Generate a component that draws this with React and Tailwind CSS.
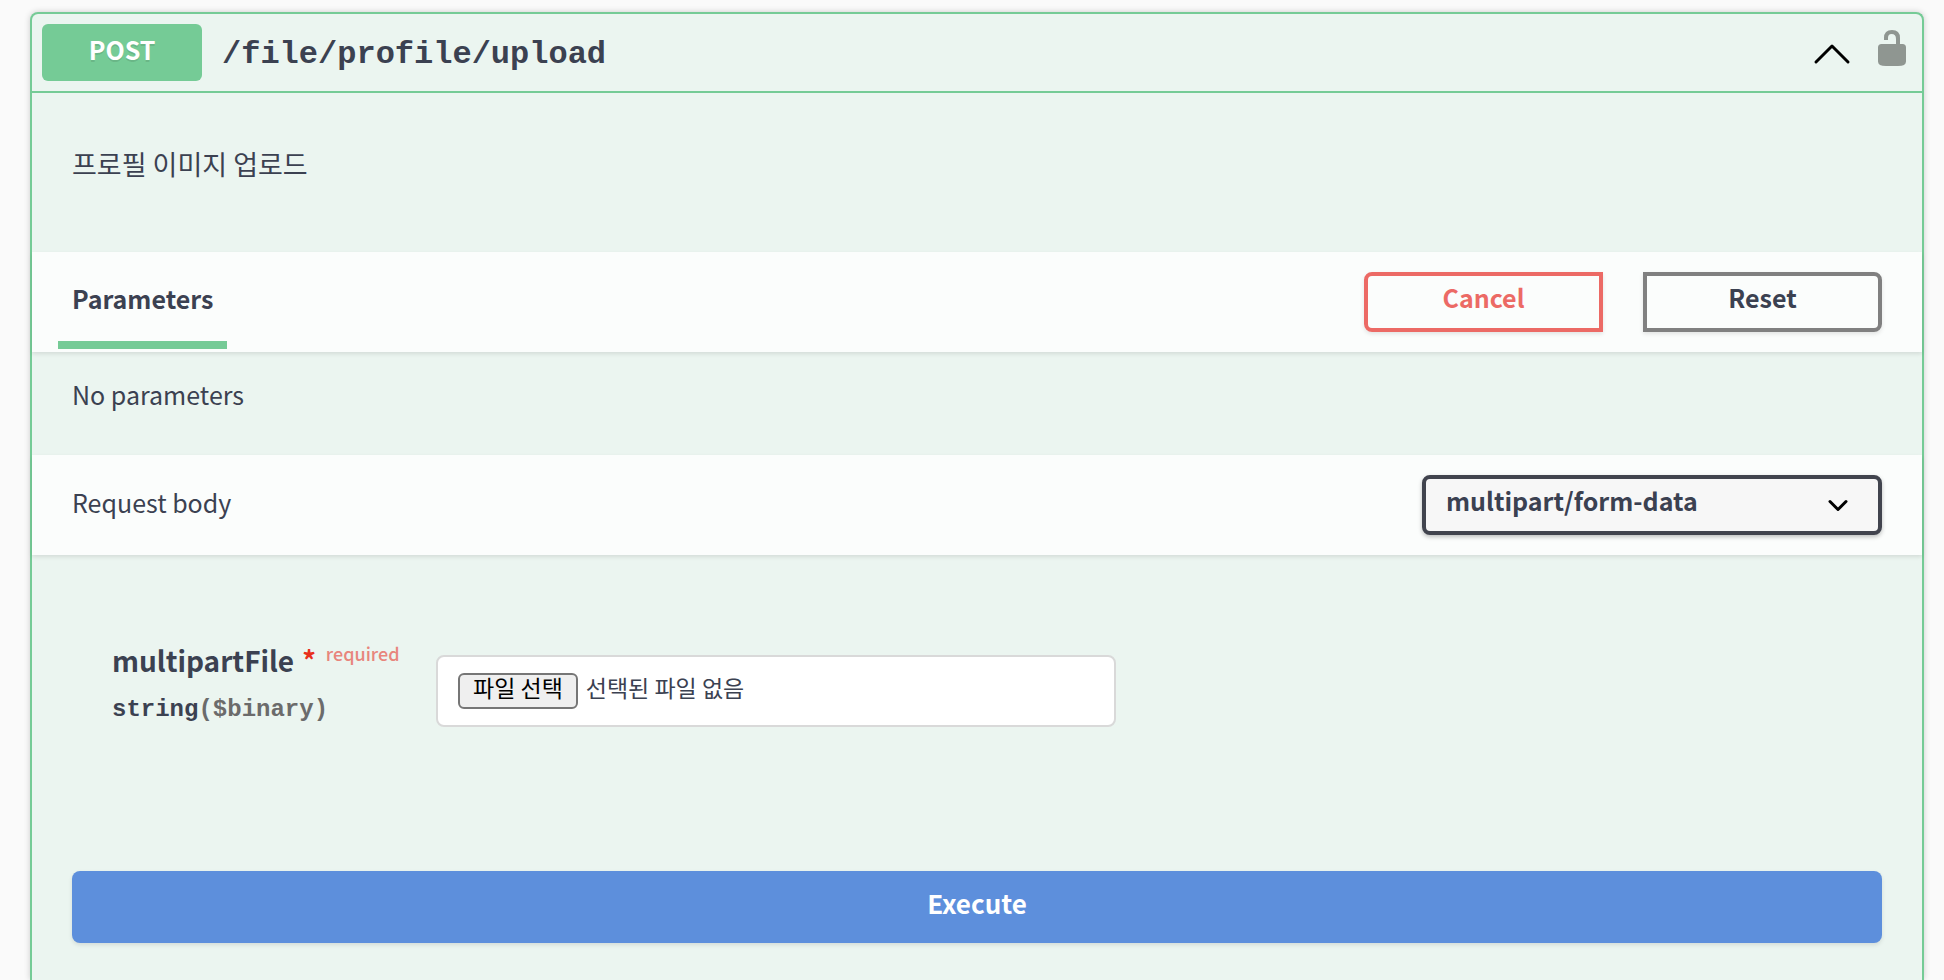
import { useRef, useState } from 'react'

export default function App() {
  const [open, setOpen] = useState(true)

  return (
    <div className="flex min-h-screen flex-col bg-[#fafafa] pt-3 pr-5 pl-[30px] font-['Noto_Sans_CJK_KR',sans-serif] text-[25px] leading-9 text-[#3b4151]">
      <section className="flex flex-1 flex-col rounded-t-lg border-2 border-b-0 border-[#75cb96] bg-[#ebf5f0] shadow-[0_0_6px_rgba(0,0,0,0.19)]">
        <Summary open={open} onToggle={() => setOpen(!open)} />
        {open && <Operation />}
      </section>
    </div>
  )
}

function Summary({ open, onToggle }) {
  return (
    <header className="flex items-center border-b-2 border-[#75cb96] px-[10px] py-[10px]">
      <span className="flex h-[57px] w-40 items-center justify-center rounded-md bg-[#75cb96] pb-2 font-bold text-white [text-shadow:0_2px_0_rgba(0,0,0,0.1)]">
        POST
      </span>
      <a href="#upload" className="ml-5 flex-1 pt-1 font-['Liberation_Mono',monospace] text-[32px] font-bold">
        /file/profile/upload
      </a>
      <button type="button" aria-label="Toggle operation" aria-expanded={open} onClick={onToggle} className="mr-6">
        <svg className="h-10 w-10" viewBox="0 0 40 40" fill="none" stroke="#000" strokeWidth="3" strokeLinecap="round" strokeLinejoin="round">
          <path d="M4 29 L20 13 L36 29" />
        </svg>
      </button>
      <button type="button" aria-label="Authorize" className="mr-1 pb-2">
        <svg className="h-10 w-8" viewBox="0 0 32 40" fill="#8f9691">
          <path d="M2 18.500 Q2 15 5.500 15 H20 V10 Q20 5 15.500 5 Q12 5 12 9 V11 H8 V9 Q8 1 16 1 Q24 1 24 9 V15 H26.500 Q30 15 30 18.500 V32.500 Q30 37 22 37 H10 Q2 37 2 32.500 Z" />
        </svg>
      </button>
    </header>
  )
}

function Operation() {
  return (
    <>
      <p className="px-10 pt-[53px] pb-[70px] text-[27px]">프로필 이미지 업로드</p>

      {/* Parameters */}
      <SectionBar>
        <h4 className="-ml-[14px] flex h-[97px] items-center self-start border-b-8 border-[#75cb96] px-[14px] pt-[2px] font-bold">
          Parameters
        </h4>
        <div className="flex gap-10">
          <button type="button" className="h-[60px] w-[239px] rounded-l-lg border-4 border-[#ec6a65] pb-[10px] font-bold text-[#ec6a65] shadow-[0_2px_4px_rgba(0,0,0,0.1)]">
            Cancel
          </button>
          <button type="button" className="h-[60px] w-[239px] rounded-r-lg border-4 border-[#808080] pb-[10px] font-bold shadow-[0_2px_4px_rgba(0,0,0,0.1)]">
            Reset
          </button>
        </div>
      </SectionBar>
      <p className="px-10 pt-6 pb-[43px]">No parameters</p>

      {/* Request body */}
      <SectionBar>
        <label htmlFor="content-type" className="pb-[6px]">Request body</label>
        <div className="relative">
          <select
            id="content-type"
            className="h-[60px] w-[460px] appearance-none rounded-lg border-4 border-[#41444e] bg-[#f7f7f7] pr-16 pb-[10px] pl-5 font-bold shadow-[0_2px_4px_rgba(0,0,0,0.25)]"
          >
            <option>multipart/form-data</option>
          </select>
          <svg className="pointer-events-none absolute top-5 right-8 h-5 w-6" viewBox="0 0 24 20" fill="none" stroke="#000" strokeWidth="3" strokeLinecap="round" strokeLinejoin="round">
            <path d="M4 6.500 L12 14.500 L20 6.500" />
          </svg>
        </div>
      </SectionBar>

      <FileField />

      <div className="px-10 pt-[136px]">
        <button type="button" className="h-[72px] w-full rounded-lg bg-[#5d8fdc] pb-2 text-[26px] font-bold text-white shadow-[0_2px_4px_rgba(0,0,0,0.1)]">
          Execute
        </button>
      </div>
    </>
  )
}

function SectionBar({ children }) {
  return (
    <div className="flex h-[100px] items-center justify-between bg-white/80 px-10 shadow-[0_2px_4px_rgba(0,0,0,0.1)]">
      {children}
    </div>
  )
}

function FileField() {
  const input = useRef(null)
  const [name, setName] = useState('')

  return (
    <div className="flex items-start pt-20 pl-20">
      <div className="w-[324px]">
        <label htmlFor="multipart-file" className="flex text-[28px] leading-[50px] font-bold">
          multipartFile
          <span className="ml-2 text-[27px] leading-[50px] text-[#e8301c]">*</span>
          <span className="ml-[10px] text-lg leading-9 font-medium text-[#e8857c]">required</span>
        </label>
        <div className="font-['Liberation_Mono',monospace] text-2xl leading-[50px] font-bold">
          string<span className="text-[#6b6b6b]">($binary)</span>
        </div>
      </div>
      <div className="mt-5 flex h-[72px] w-[680px] items-center rounded-lg border-2 border-[#d9d9d9] bg-white px-5 text-[23px]">
        <input
          ref={input}
          id="multipart-file"
          type="file"
          className="sr-only"
          onChange={(e) => setName(e.target.files[0]?.name ?? '')}
        />
        <button
          type="button"
          onClick={() => input.current.click()}
          className="mr-2 h-9 rounded-md border-2 border-[#767676] bg-[#efefef] px-[13px] pb-2 leading-6 text-black"
        >
          파일 선택
        </button>
        <span className="pb-2">{name || '선택된 파일 없음'}</span>
      </div>
    </div>
  )
}
